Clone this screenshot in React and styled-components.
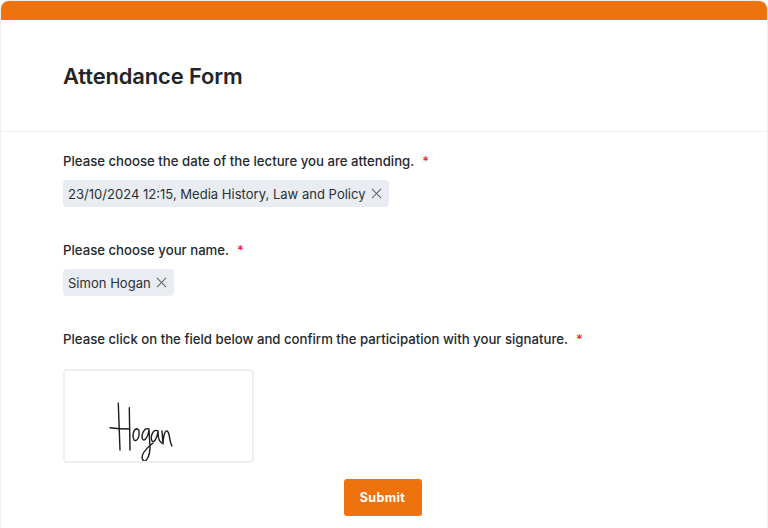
import React from "react";
import styled, { createGlobalStyle } from "styled-components";

const fields = [
  { label: "Please choose the date of the lecture you are attending.", tag: "23/10/2024 12:15, Media History, Law and Policy" },
  { label: "Please choose your name.", tag: "Simon Hogan" },
];

function Signature() {
  return (
    <svg width="187" height="90" viewBox="0 0 187 90" fill="none" stroke="#1c1c1c" strokeWidth="1.4" strokeLinecap="round" strokeLinejoin="round">
      <path d="M53.300 32.300 L55 79" />
      <path d="M64.300 36.700 L65 79" />
      <path d="M45 56.700 C51 57.500 58 58 64.300 58" />
      <path d="M72 58 C68 58 67 66 69 69 C72 71 75 66 74 60 C73.500 58 72 57.500 71 58" />
      <path d="M84 58 C79 56 76 64 77.500 68 C79 71 83 67 84 59 L85 76 C85 86 80 93 78 89 C75 85 80 78 88 72" />
      <path d="M93 60 C88 57 85 66 87 70 C89 72 92 68 93 60 C93 66 94 71 97 72" />
      <path d="M97 60 L98 73 C98 66 100 59 102 60 C105 61 104 70 107 75" />
    </svg>
  );
}

export default function App() {
  return (
    <>
      <GlobalStyle />
      <Page>
        <TopBar />
        <Header>
          <Title>Attendance Form</Title>
        </Header>
        <Form>
          {fields.map((field) => (
            <Field key={field.tag}>
              <Label>
                {field.label}
                <Required>*</Required>
              </Label>
              <Tag>
                {field.tag}
                <Remove viewBox="0 0 12 12">
                  <path d="M1 1 L11 11 M11 1 L1 11" />
                </Remove>
              </Tag>
            </Field>
          ))}
          <Label>
            Please click on the field below and confirm the participation with your signature.
            <Required>*</Required>
          </Label>
          <SignatureBox>
            <Signature />
          </SignatureBox>
          <Actions>
            <SubmitButton type="button">Submit</SubmitButton>
          </Actions>
        </Form>
      </Page>
    </>
  );
}

const GlobalStyle = createGlobalStyle`
  html, body {
    margin: 0;
    height: 100%;
    background: #fff;
    overflow: hidden;
  }
  body {
    font-family: Inter, "Liberation Sans", sans-serif;
    color: #212529;
  }
`;

const Page = styled.div`
  width: 766px;
  height: 528px;
  margin: 0 1px;
  box-shadow: 0 0 0 1px #eeeff1;
  border-radius: 8px 8px 0 0;
`;

const TopBar = styled.div`
  height: 19px;
  margin-top: 1px;
  background: #ef730c;
  border-radius: 8px 8px 0 0;
`;

const Header = styled.header`
  height: 112px;
  padding: 0 62px;
  display: flex;
  align-items: center;
  border-bottom: 1px solid #eeeff1;
  box-sizing: border-box;
`;

const Title = styled.h1`
  margin: 0;
  font-size: 21.900px;
  font-weight: 600;
  letter-spacing: -0.1px;
  color: #212529;
`;

const Form = styled.form`
  padding: 19px 65px 0 62px;
  display: flex;
  flex-direction: column;
  align-items: flex-start;
`;

const Field = styled.div`
  display: flex;
  flex-direction: column;
  align-items: flex-start;
  margin-bottom: 33px;
`;

const Label = styled.div`
  height: 20px;
  line-height: 20px;
  font-size: 13.200px;
  font-weight: 500;
  color: #25292d;
`;

const Required = styled.span`
  margin-left: 8px;
  color: #ee2222;
  font-size: 13px;
`;

const Tag = styled.div`
  display: flex;
  align-items: center;
  gap: 5px;
  height: 27px;
  margin-top: 9px;
  padding: 0 7px 0 5px;
  border-radius: 4px;
  background: #e9edf2;
  font-size: 13.050px;
  color: #2b3036;
`;

const Remove = styled.svg`
  width: 11px;
  height: 11px;
  fill: none;
  stroke: #5c6268;
  stroke-width: 1.100;
`;

const SignatureBox = styled.div`
  width: 187px;
  height: 90px;
  margin-top: 20px;
  border: 2px solid #eeeff1;
  border-radius: 4px;
  line-height: 0;
`;

const Actions = styled.div`
  align-self: stretch;
  display: flex;
  justify-content: center;
  margin-top: 16px;
`;

const SubmitButton = styled.button`
  width: 78px;
  height: 37px;
  border: none;
  border-radius: 3px;
  background: #ef730c;
  color: #fff;
  font-family: inherit;
  font-size: 12.500px;
  font-weight: 700;
  letter-spacing: 0.4px;
`;
